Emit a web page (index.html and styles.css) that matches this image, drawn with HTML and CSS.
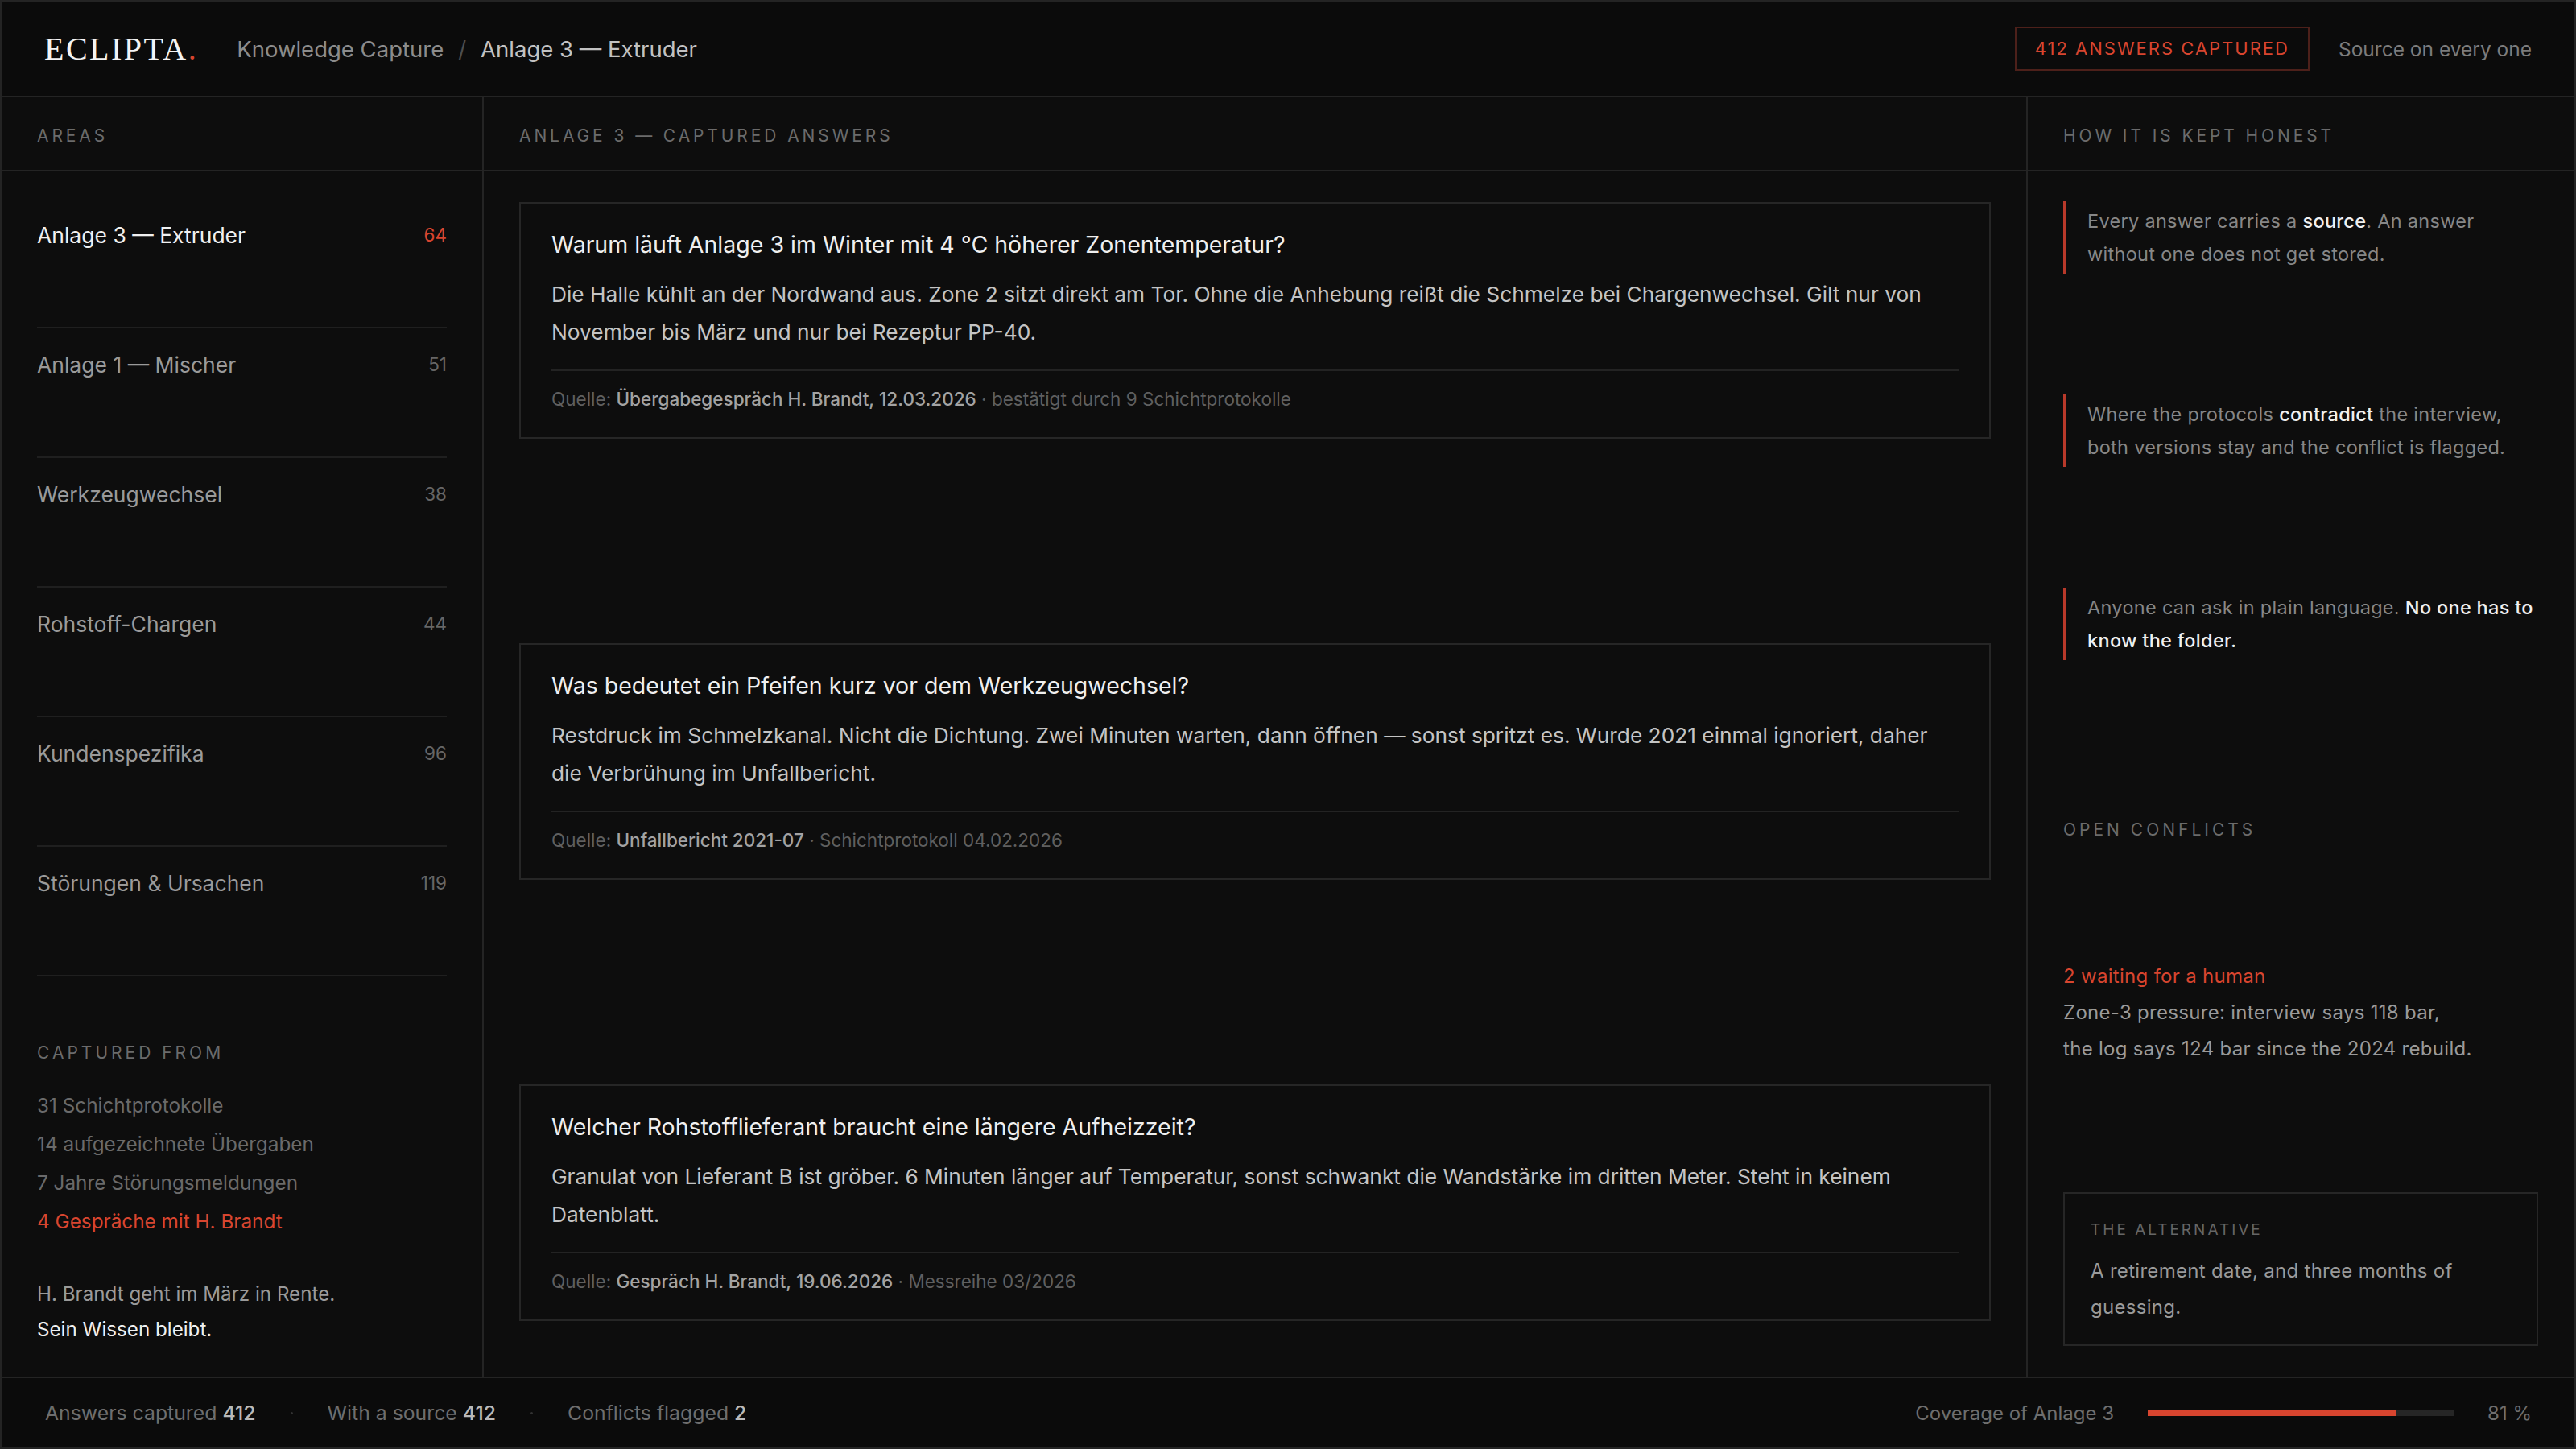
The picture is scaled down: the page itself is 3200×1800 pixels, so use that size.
FILE: index.html
```html
<!DOCTYPE html>
<html lang="de">
<head>
  <meta charset="UTF-8">
  <meta name="viewport" content="width=device-width, initial-scale=1.0">
  <title>Eclipta — Knowledge Capture</title>
  <link rel="stylesheet" href="styles.css">
</head>
<body>
  <div class="app">
    <header class="topbar">
      <div class="brand">
        <span class="logo">ECLIPTA<span class="logo-dot">.</span></span>
        <nav class="crumbs">
          <span class="crumb">Knowledge Capture</span>
          <span class="crumb-sep">/</span>
          <span class="crumb current">Anlage 3 — Extruder</span>
        </nav>
      </div>
      <div class="top-meta">
        <span class="badge">412 Answers captured</span>
        <span class="top-note">Source on every one</span>
      </div>
    </header>

    <main class="columns">
      <aside class="sidebar">
        <div class="col-head">Areas</div>
        <ul class="areas">
          <li class="area active"><span>Anlage 3 — Extruder</span><span class="count">64</span></li>
          <li class="area"><span>Anlage 1 — Mischer</span><span class="count">51</span></li>
          <li class="area"><span>Werkzeugwechsel</span><span class="count">38</span></li>
          <li class="area"><span>Rohstoff-Chargen</span><span class="count">44</span></li>
          <li class="area"><span>Kundenspezifika</span><span class="count">96</span></li>
          <li class="area"><span>Störungen &amp; Ursachen</span><span class="count">119</span></li>
        </ul>

        <div class="sources">
          <div class="label">Captured from</div>
          <ul class="source-list">
            <li>31 Schichtprotokolle</li>
            <li>14 aufgezeichnete Übergaben</li>
            <li>7 Jahre Störungsmeldungen</li>
            <li class="hot">4 Gespräche mit H. Brandt</li>
          </ul>
          <p class="retire">H. Brandt geht im März in Rente.<br><span class="keep">Sein Wissen bleibt.</span></p>
        </div>
      </aside>

      <section class="answers">
        <div class="col-head">Anlage 3 — Captured answers</div>
        <div class="cards">
          <article class="card">
            <h3>Warum läuft Anlage 3 im Winter mit 4 °C höherer Zonentemperatur?</h3>
            <p>Die Halle kühlt an der Nordwand aus. Zone 2 sitzt direkt am Tor. Ohne die Anhebung reißt die Schmelze bei Chargenwechsel. Gilt nur von November bis März und nur bei Rezeptur PP-40.</p>
            <div class="source">Quelle: <b>Übergabegespräch H. Brandt, 12.03.2026</b> · bestätigt durch 9 Schichtprotokolle</div>
          </article>
          <article class="card">
            <h3>Was bedeutet ein Pfeifen kurz vor dem Werkzeugwechsel?</h3>
            <p>Restdruck im Schmelzkanal. Nicht die Dichtung. Zwei Minuten warten, dann öffnen — sonst spritzt es. Wurde 2021 einmal ignoriert, daher die Verbrühung im Unfallbericht.</p>
            <div class="source">Quelle: <b>Unfallbericht 2021-07</b> · Schichtprotokoll 04.02.2026</div>
          </article>
          <article class="card">
            <h3>Welcher Rohstofflieferant braucht eine längere Aufheizzeit?</h3>
            <p>Granulat von Lieferant B ist gröber. 6 Minuten länger auf Temperatur, sonst schwankt die Wandstärke im dritten Meter. Steht in keinem Datenblatt.</p>
            <div class="source">Quelle: <b>Gespräch H. Brandt, 19.06.2026</b> · Messreihe 03/2026</div>
          </article>
        </div>
      </section>

      <aside class="honest">
        <div class="col-head">How it is kept honest</div>
        <div class="honest-body">
          <p class="rule">Every answer carries a <strong>source</strong>. An answer without one does not get stored.</p>
          <p class="rule">Where the protocols <strong>contradict</strong> the interview, both versions stay and the conflict is flagged.</p>
          <p class="rule">Anyone can ask in plain language. <strong>No one has to know the folder.</strong></p>

          <div class="label conflicts-label">Open conflicts</div>
          <p class="conflict"><span class="hot">2 waiting for a human</span><br>Zone-3 pressure: interview says 118 bar,<br>the log says 124 bar since the 2024 rebuild.</p>

          <div class="alt">
            <div class="alt-label">The alternative</div>
            <p>A retirement date, and three months of guessing.</p>
          </div>
        </div>
      </aside>
    </main>

    <footer class="statusbar">
      <div class="stats">
        <span>Answers captured <b>412</b></span>
        <span class="dot"></span>
        <span>With a source <b>412</b></span>
        <span class="dot"></span>
        <span>Conflicts flagged <b>2</b></span>
      </div>
      <div class="coverage">
        <span>Coverage of Anlage 3</span>
        <div class="meter"><div class="meter-fill" style="width: 81%"></div></div>
        <span>81 %</span>
      </div>
    </footer>
  </div>
</body>
</html>
```

FILE: styles.css
```css
:root {
  --bg: #0d0d0d;
  --bar-bg: #0b0b0b;
  --line: #242424;
  --text: #f0f0f0;
  --body: #c4c4c4;
  --muted: #8c8c8c;
  --dim: #666;
  --red: #d8452f;
  --red-line: #4d201a;
}

* {
  margin: 0;
  padding: 0;
  box-sizing: border-box;
}

body {
  background: var(--bg);
  color: var(--text);
  font-family: 'Inter', 'Liberation Sans', sans-serif;
}

.app {
  width: 3200px;
  height: 1800px;
  border: 2px solid var(--line);
  display: flex;
  flex-direction: column;
}

/* top bar */
.topbar {
  height: 119px;
  flex: none;
  display: flex;
  align-items: center;
  justify-content: space-between;
  padding: 0 53px;
  background: var(--bar-bg);
  border-bottom: 2px solid var(--line);
}

.brand {
  display: flex;
  align-items: center;
  gap: 48px;
}

.logo {
  font-family: 'Liberation Serif', serif;
  font-size: 40px;
  letter-spacing: 2.5px;
  color: #f4f4f4;
}

.logo-dot {
  color: var(--red);
}

.crumbs {
  display: flex;
  gap: 18px;
  font-size: 27.5px;
  color: var(--muted);
}

.crumb-sep {
  color: #4e4e4e;
}

.crumb.current {
  color: #c2c2c2;
}

.top-meta {
  display: flex;
  align-items: center;
  gap: 36px;
}

.badge {
  display: inline-block;
  height: 55px;
  line-height: 51px;
  padding: 0 23px;
  border: 2px solid var(--red-line);
  color: var(--red);
  font-size: 22px;
  letter-spacing: 2px;
  text-transform: uppercase;
}

.top-note {
  font-size: 24.5px;
  color: #7c7c7c;
}

/* three columns */
.columns {
  flex: 1;
  display: grid;
  grid-template-columns: 599px 1fr 681px;
  min-height: 0;
}

.col-head {
  height: 92px;
  padding: 5px 44px 0;
  display: flex;
  align-items: center;
  border-bottom: 2px solid var(--line);
  font-size: 21px;
  letter-spacing: 3.9px;
  text-transform: uppercase;
  color: #6b6b6b;
}

.sidebar {
  border-right: 2px solid var(--line);
}

.areas {
  list-style: none;
  padding: 34px 44px 0;
}

.area {
  height: 161px;
  padding-top: 30px;
  display: flex;
  justify-content: space-between;
  line-height: 30px;
  font-size: 26.5px;
  color: #9a9a9a;
  border-bottom: 2px solid #1f1f1f;
}

.area .count {
  font-size: 22.5px;
  color: #666;
}

.area.active {
  color: var(--text);
}

.area.active .count {
  color: var(--red);
}

.sources {
  padding: 80px 44px 0;
}

.label {
  font-size: 21px;
  line-height: 30px;
  letter-spacing: 4px;
  text-transform: uppercase;
  color: #6b6b6b;
}

.source-list {
  list-style: none;
  margin-top: 26px;
  font-size: 24.3px;
  line-height: 48px;
  color: #6a6a6a;
}

.hot {
  color: var(--red);
}

.retire {
  margin-top: 45px;
  font-size: 24.2px;
  line-height: 44px;
  color: #9a9a9a;
}

.retire .keep {
  color: var(--text);
}

/* answers */
.answers {
  min-width: 0;
}

.cards {
  padding: 38px 44px 0;
  display: flex;
  flex-direction: column;
  gap: 254px;
}

.card {
  border: 2px solid #262626;
  padding: 31px 38px 30px;
}

.card h3 {
  font-size: 28.5px;
  font-weight: 400;
  line-height: 40px;
  color: #efefef;
}

.card p {
  margin-top: 18px;
  font-size: 26.3px;
  line-height: 47px;
  color: var(--body);
}

.source {
  margin-top: 23px;
  padding-top: 18px;
  border-top: 2px solid #232323;
  font-size: 22.5px;
  line-height: 34px;
  color: #5f5f5f;
}

.source b {
  font-weight: 500;
  color: #a3a3a3;
}

/* right column */
.honest {
  border-left: 2px solid var(--line);
}

.honest-body {
  padding: 37px 45px 0 44px;
}

.rule {
  border-left: 3px solid #b8392a;
  padding: 4px 0 4px 27px;
  margin-bottom: 150px;
  font-size: 23.5px;
  line-height: 41px;
  letter-spacing: 0.3px;
  color: #878787;
}

.rule:nth-of-type(3) {
  margin-bottom: 196px;
}

.rule strong {
  font-weight: 500;
  color: var(--text);
}

.conflict {
  margin-top: 144px;
  font-size: 24px;
  line-height: 45px;
  letter-spacing: 0.3px;
  color: #9a9a9a;
}

.alt {
  margin-top: 156px;
  border: 2px solid #262626;
  padding: 31px 32px 24px;
}

.alt-label {
  font-size: 19px;
  line-height: 28px;
  letter-spacing: 3px;
  text-transform: uppercase;
  color: #666;
}

.alt p {
  margin-top: 14px;
  font-size: 24px;
  line-height: 45px;
  letter-spacing: 0.3px;
  color: #9a9a9a;
}

/* status bar */
.statusbar {
  height: 88px;
  flex: none;
  display: flex;
  align-items: center;
  justify-content: space-between;
  padding: 0 53px 0 54px;
  background: var(--bar-bg);
  border-top: 2px solid var(--line);
  font-size: 24.8px;
  color: #6e6e6e;
}

.statusbar b {
  font-weight: 500;
  color: #b9b9b9;
}

.stats,
.coverage {
  display: flex;
  align-items: center;
  gap: 42px;
}

.stats {
  gap: 43px;
}

.coverage {
  font-size: 24px;
}

.dot {
  width: 3px;
  height: 3px;
  border-radius: 50%;
  background: #333;
}

.meter {
  width: 380px;
  height: 7px;
  background: #262626;
}

.meter-fill {
  height: 100%;
  background: var(--red);
}
```
